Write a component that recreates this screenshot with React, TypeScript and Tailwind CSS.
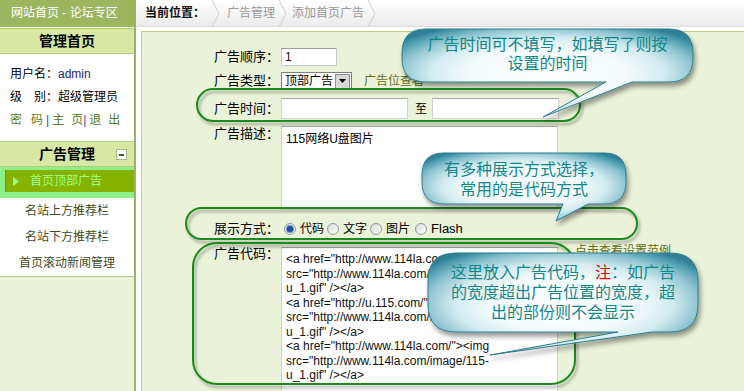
import React from "react";

const codeLines = [
  '<a href="http://www.114la.com/"><img',
  'src="http://www.114la.com/image/115-',
  'u_1.gif" /></a>',
  '<a href="http://u.115.com/"><img',
  'src="http://www.114la.com/image/115-',
  'u_1.gif" /></a>',
  '<a href="http://www.114la.com/"><img',
  'src="http://www.114la.com/image/115-',
  'u_1.gif" /></a>',
];

function bubble(
  x: number,
  y: number,
  w: number,
  h: number,
  r: number,
  a: number,
  b: number,
  tx: number,
  ty: number
) {
  return `M${x + r},${y} H${x + w - r} Q${x + w},${y} ${x + w},${y + r} V${y + h - r} Q${x + w},${y + h} ${x + w - r},${y + h} H${b} L${tx},${ty} L${a},${y + h} H${x + r} Q${x},${y + h} ${x},${y + h - r} V${y + r} Q${x},${y} ${x + r},${y} Z`;
}

function Chevron() {
  return (
    <svg width="10" height="27" className="shrink-0">
      <polyline points="1,0 8,13.5 1,27" fill="none" stroke="#cfcfcf" strokeWidth="1" />
    </svg>
  );
}

function Radio({ checked }: { checked?: boolean }) {
  return (
    <span className="relative inline-block w-[12px] h-[12px] rounded-full border border-[#8f9aa3] bg-gradient-to-br from-[#d8d8d8] to-[#ffffff] shrink-0">
      {checked && (
        <span className="absolute left-[2px] top-[2px] w-[6px] h-[6px] rounded-full bg-[#1d4f9c] ring-1 ring-[#6f95cc]" />
      )}
    </span>
  );
}

function Sidebar() {
  return (
    <div className="w-[136px] shrink-0 flex flex-col border-r-2 border-[#9cb55a] bg-[#eaf3d9]">
      <div className="h-[27px] bg-[#9db55e] text-white text-[12px] leading-[27px] pl-[11px] whitespace-nowrap">
        网站首页 - 论坛专区
      </div>
      <div className="h-[1px] bg-white" />
      <div className="h-[26px] bg-[#d8e8a4] border-y border-[#b5cb78] flex items-center justify-center text-[14px] font-bold text-black">
        管理首页
      </div>
      <div className="h-[87px] bg-white text-[12px] pl-[10px] pt-[9px] leading-[23px] text-black">
        <div>
          用户名：<span className="text-[#1c2470]">admin</span>
        </div>
        <div>级　别：超级管理员</div>
        <div className="text-[#5b7a22] flex">
          <span className="mr-[9px]">密</span>
          <span>码</span>
          <span className="ml-[3px] mr-[3px] text-[#2a4a9a]">|</span>
          <span className="mr-[7px]">主</span>
          <span>页</span>
          <span className="mr-[3px] text-[#2a4a9a]">|</span>
          <span className="mr-[7px]">退</span>
          <span>出</span>
        </div>
      </div>
      <div className="h-[26px] bg-[#d8e8a4] border-y border-[#b5cb78] flex items-center relative text-[14px] font-bold text-black">
        <span className="w-full text-center">广告管理</span>
        <span className="absolute right-[7px] top-[7px] w-[11px] h-[11px] bg-white border border-[#a8b98a] flex items-center justify-center">
          <span className="w-[5px] h-[2px] bg-[#4a5a2a]" />
        </span>
      </div>
      <div className="bg-[#8ef08a] pt-[3px] pb-[6px] pl-[5px]">
        <div className="h-[22px] bg-[#86b300] border-l border-[#6e9400] flex items-center text-[12px] text-[#9cff8c]">
          <svg width="6" height="9" className="ml-[7px] mr-[11px]">
            <polygon points="0,0 6,4.5 0,9" fill="#9cff8c" />
          </svg>
          首页顶部广告
        </div>
      </div>
      <div className="bg-white text-[12px] text-[#3f4b22]">
        <div className="h-[26px] flex items-center justify-center">名站上方推荐栏</div>
        <div className="h-[26px] flex items-center justify-center">名站下方推荐栏</div>
        <div className="h-[26px] flex items-center justify-center">首页滚动新闻管理</div>
      </div>
      <div className="h-[1px] bg-[#b4c48e]" />
      <div className="flex-1 bg-[#eaf3d9]" />
    </div>
  );
}

function Main() {
  return (
    <div className="flex-1 flex flex-col bg-white">
      <div className="h-[27px] shrink-0 bg-gradient-to-b from-[#ffffff] to-[#ebebeb] border-b border-[#dcdcdc] flex items-center pl-[9px] text-[12px] whitespace-nowrap">
        <span className="font-bold text-[#111] mr-[6px]">当前位置：</span>
        <Chevron />
        <span className="text-[#9a9a9a] ml-[6px] mr-[3px]">广告管理</span>
        <Chevron />
        <span className="text-[#9a9a9a] ml-[4px] mr-[3px]">添加首页广告</span>
        <Chevron />
      </div>
      <div className="h-[4px] shrink-0" />
      <div className="flex-1 ml-[5px] bg-[#eaf3d9] border-t border-l border-[#bcd08e] pt-[16px] text-[13px] text-black">
        <div className="flex items-center h-[18px]">
          <div className="w-[137px] text-right">广告顺序：</div>
          <div className="ml-[2px] w-[56px] h-[18px] bg-white border border-[#c9c9c9] border-t-[#9c9c9c] text-[12px] leading-[16px] pl-[3px] text-[#111]">
            1
          </div>
        </div>
        <div className="flex items-center h-[18px] mt-[6px]">
          <div className="w-[137px] text-right">广告类型：</div>
          <div className="ml-[2px] w-[71px] h-[18px] bg-white border border-[#7f7f7f] flex items-center">
            <span className="flex-1 pl-[3px] text-[12px] leading-[16px]">顶部广告</span>
            <span className="w-[15px] h-[15px] mr-[1px] bg-[#d8d8d8] border border-[#8a8a8a] flex items-center justify-center">
              <svg width="7" height="4">
                <polygon points="0,0 7,0 3.5,4" fill="#000" />
              </svg>
            </span>
          </div>
          <span className="ml-[12px] text-[12px] text-[#5f6e22]">广告位查看</span>
        </div>
        <div className="flex items-center h-[21px] mt-[8px]">
          <div className="w-[137px] text-right">广告时间：</div>
          <div className="ml-[2px] w-[127px] h-[21px] bg-white border border-[#d2d2d2] border-t-[#a8a8a8]" />
          <span className="ml-[7px] mr-[5px] text-[12px]">至</span>
          <div className="w-[127px] h-[21px] bg-white border border-[#d2d2d2] border-t-[#a8a8a8]" />
        </div>
        <div className="flex items-start mt-[7px]">
          <div className="w-[137px] text-right leading-[13px] pt-[1px]">广告描述：</div>
          <div className="ml-[2px] w-[277px] h-[84px] bg-white border border-[#d2d2d2] border-t-[#a8a8a8] pl-[4px] pt-[5px] text-[12px] leading-[14px]">
            115网络U盘图片
          </div>
        </div>
        <div className="flex items-center h-[18px] mt-[10px] text-[12px]">
          <div className="w-[137px] text-right text-[13px]">展示方式：</div>
          <span className="ml-[5px] mr-[4px] flex"><Radio checked /></span>
          <span>代码</span>
          <span className="ml-[3px] mr-[4px] flex"><Radio /></span>
          <span>文字</span>
          <span className="ml-[3px] mr-[4px] flex"><Radio /></span>
          <span>图片</span>
          <span className="ml-[5px] mr-[4px] flex"><Radio /></span>
          <span className="font-['Liberation_Sans',sans-serif] text-[13px]">Flash</span>
        </div>
        <div className="flex items-start mt-[9px]">
          <div className="w-[137px] text-right leading-[13px]">广告代码：</div>
          <div className="ml-[2px] w-[277px] h-[160px] bg-white border border-[#d2d2d2] border-t-[#a8a8a8] pl-[4px] pt-[4px] text-[12px] leading-[14.5px] font-['Liberation_Sans',sans-serif] text-[#111] whitespace-nowrap overflow-hidden">
            {codeLines.map((l, i) => (
              <div key={i}>{l}</div>
            ))}
          </div>
          <span className="ml-[17px] -mt-[5px] text-[12px] text-[#5f6e22]">点击查看设置范例</span>
        </div>
      </div>
    </div>
  );
}

function Overlay() {
  return (
    <>
      <svg className="absolute left-0 top-0 pointer-events-none" width="744" height="391">
        <defs>
          <filter id="osh" x="-10%" y="-30%" width="130%" height="180%">
            <feDropShadow dx="2" dy="3" stdDeviation="1.6" floodColor="#000" floodOpacity="0.35" />
          </filter>
          <filter id="bsh" x="-10%" y="-20%" width="130%" height="160%">
            <feDropShadow dx="2" dy="4" stdDeviation="2.5" floodColor="#000" floodOpacity="0.4" />
          </filter>
          <radialGradient id="bg" cx="0.5" cy="0.5" r="0.62">
            <stop offset="0" stopColor="#ffffff" />
            <stop offset="0.45" stopColor="#f2fafb" />
            <stop offset="0.65" stopColor="#d2ebf0" />
            <stop offset="0.82" stopColor="#8cc3cf" />
            <stop offset="0.93" stopColor="#4f9db0" />
            <stop offset="1" stopColor="#2f8096" />
          </radialGradient>
        </defs>
        <g filter="url(#osh)" fill="none" stroke="#1d8a1d" strokeWidth="2">
          <rect x="197" y="89" width="383" height="32" rx="16" />
          <rect x="186" y="208" width="451" height="31" rx="15.5" />
          <rect x="193" y="243" width="382" height="141" rx="24" />
        </g>
        <g filter="url(#bsh)" fill="url(#bg)" stroke="#2f7d8e" strokeWidth="1">
          <path d={bubble(402, 29, 291, 53, 24, 606, 632, 543, 117)} />
          <path d={bubble(422, 153, 204, 51, 22, 563, 588, 556, 221)} />
          <path d={bubble(428, 253, 270, 79, 28, 618, 652, 490, 355)} />
        </g>
      </svg>
      <div className="absolute left-[402px] top-[35px] w-[291px] text-center text-[16px] leading-[19px] text-[#128789] whitespace-nowrap">
        广告时间可不填写，如填写了则按
        <br />
        设置的时间
      </div>
      <div className="absolute left-[422px] top-[160px] w-[204px] text-center text-[16px] leading-[20px] text-[#128789] whitespace-nowrap">
        有多种展示方式选择，
        <br />
        常用的是代码方式
      </div>
      <div className="absolute left-[428px] top-[263px] w-[270px] text-center text-[16px] leading-[20px] text-[#128789] whitespace-nowrap">
        这里放入广告代码，<span className="text-[#d80000]">注</span>：如广告
        <br />
        的宽度超出广告位置的宽度，超
        <br />
        出的部份则不会显示
      </div>
    </>
  );
}

export default function App() {
  return (
    <div className="relative w-[744px] h-[391px] overflow-hidden bg-white font-['Liberation_Sans','Noto_Sans_CJK_SC',sans-serif]">
      <div className="flex h-full">
        <Sidebar />
        <Main />
      </div>
      <Overlay />
    </div>
  );
}
